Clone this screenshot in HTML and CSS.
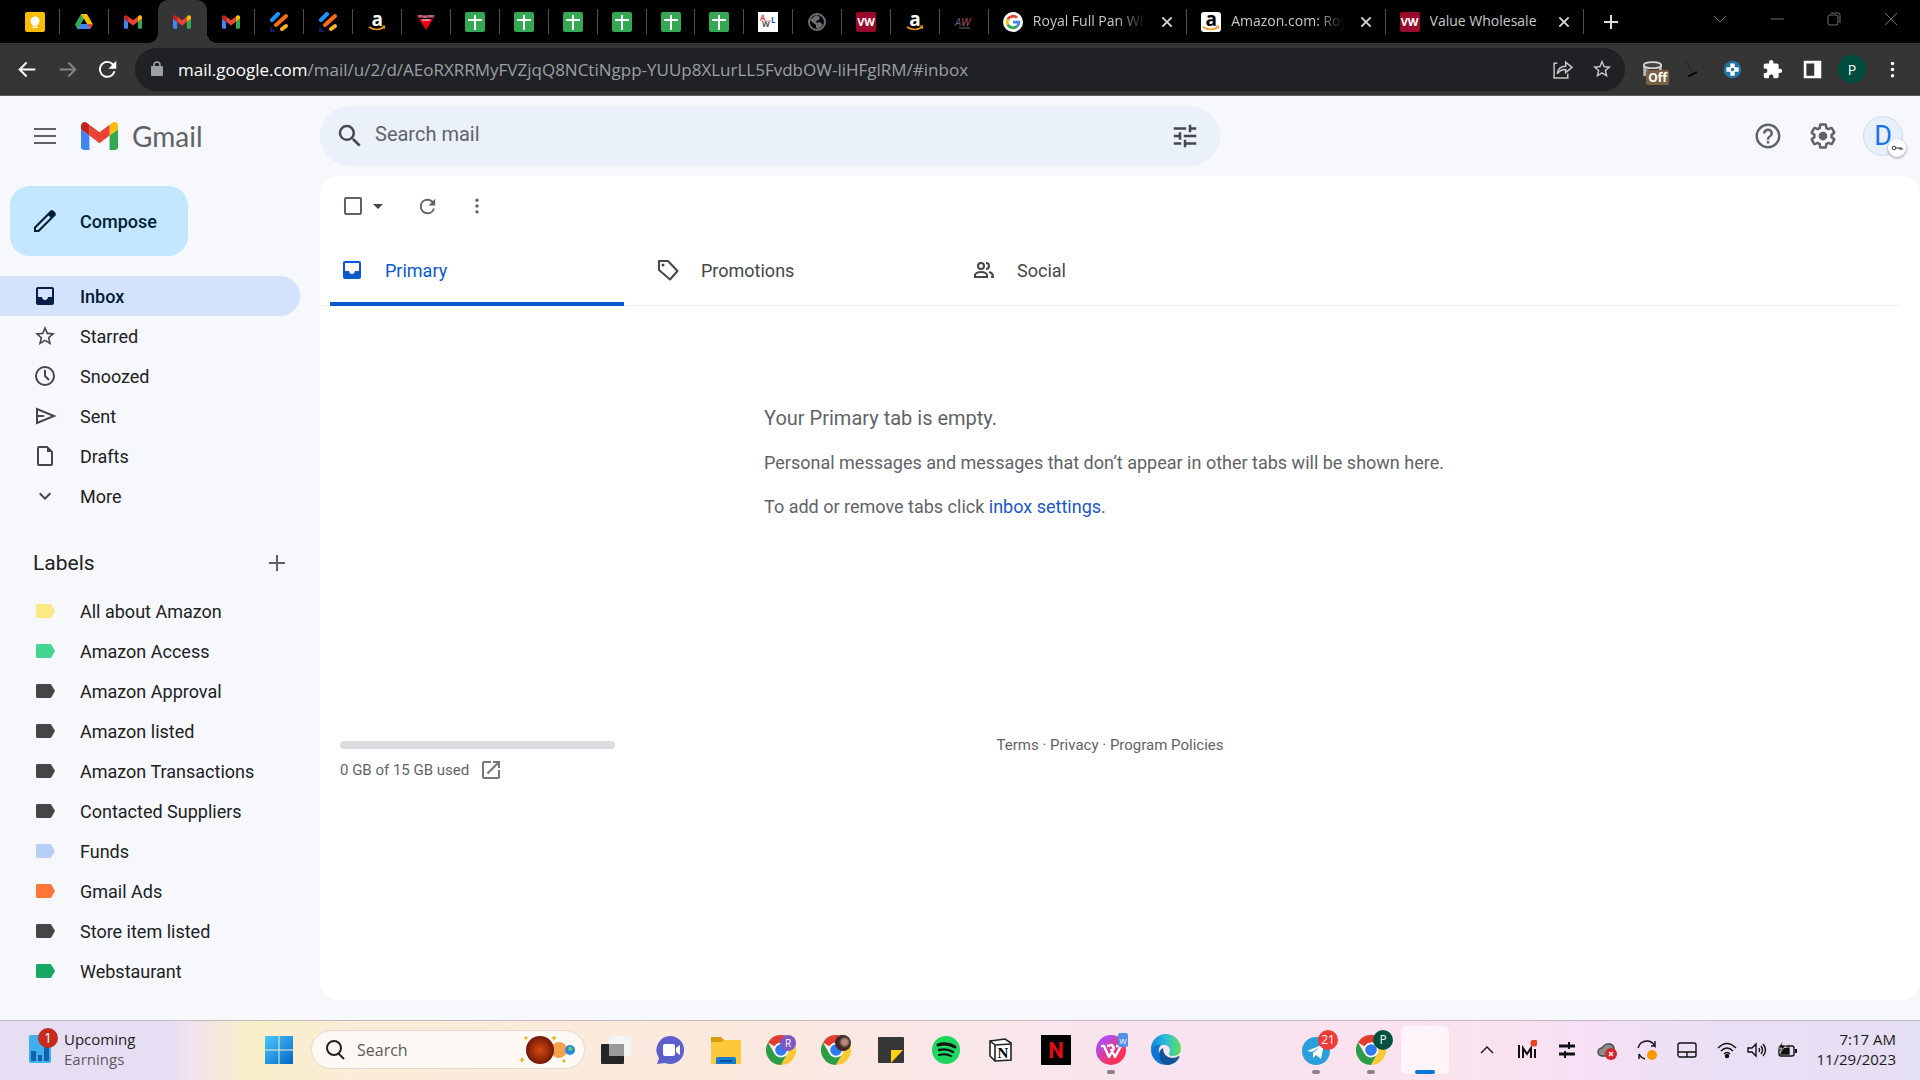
FILE: index.html
```html
<!DOCTYPE html>
<html lang="en">
<head>
  <meta charset="UTF-8" />
  <meta name="viewport" content="width=device-width, initial-scale=1.0"/>
  <title>Gmail</title>
  <link rel="stylesheet" href="styles.css">
</head>
<body>
  <!-- Shared icons -->
  <svg class="sprite" aria-hidden="true">
    <symbol id="gmail" viewBox="52 42 88 66">
      <path fill="#4285f4" d="M58 108h14V74L52 59v43c0 3.320 2.690 6 6 6"/>
      <path fill="#34a853" d="M120 108h14c3.320 0 6-2.690 6-6V59l-20 15"/>
      <path fill="#fbbc04" d="M120 48v26l20-15v-8c0-7.420-8.470-11.650-14.400-7.200"/>
      <path fill="#ea4335" d="M72 74V48l24 18 24-18v26L96 92"/>
      <path fill="#c5221f" d="M52 51v8l20 15V48l-5.600-4.200c-5.940-4.450-14.400-.22-14.400 7.200"/>
    </symbol>
    <symbol id="sheet" viewBox="0 0 20 20">
      <rect width="20" height="20" rx="2" fill="#34a853"/>
      <path d="M9 3h2v4h6v2h-6v9H9V9H3V7h6z" fill="#fff"/>
    </symbol>
    <symbol id="stripes" viewBox="0 0 20 20">
      <g fill="none" stroke-width="4" stroke-linecap="round">
        <path d="M3 8l6-6" stroke="#1a96ff"/>
        <path d="M7 13L17 4" stroke="#ff6a13"/>
        <path d="M13 17l4-3" stroke="#fdb022"/>
      </g>
      <path d="M1 14l6 6H1z" fill="#101a5c"/>
    </symbol>
    <symbol id="smile" viewBox="0 0 20 20">
      <path d="M2 15q8 5 15 0" fill="none" stroke="#f79a1c" stroke-width="1.600"/>
      <path d="M15 14h3l-1 3" fill="none" stroke="#f79a1c"/>
    </symbol>
    <symbol id="chrome" viewBox="0 0 30 30">
      <path d="M15 15L2 7.500A15 15 0 0 1 28 7.500H15z" fill="#e33b2e"/>
      <path d="M15 15l6.500 3.750L15 30A15 15 0 0 1 2 7.500l6.500 11.250z" fill="#2a9d46"/>
      <path d="M15 7.500h13A15 15 0 0 1 15 30l6.500-11.250L15 15z" fill="#fcc934"/>
      <circle cx="15" cy="15" r="7.500" fill="#fff"/>
      <circle cx="15" cy="15" r="5.800" fill="#3079ee"/>
    </symbol>
    <symbol id="close" viewBox="0 0 12 12">
      <path d="M2 2l8 8M10 2l-8 8" stroke="#d5d5d5" stroke-width="1.600"/>
    </symbol>
    <symbol id="inbox" viewBox="0 0 24 24">
      <path fill="currentColor" fill-rule="evenodd" d="M19 3H5c-1.100 0-2 .9-2 2v14c0 1.100.9 2 2 2h14c1.100 0 2-.9 2-2V5c0-1.100-.9-2-2-2zM5 5h14v8h-4c0 1.600-1.350 3-3 3s-3-1.400-3-3H5z"/>
    </symbol>
    <symbol id="label" viewBox="0 0 24 24">
      <path fill="currentColor" d="M17 5H4.500C3.700 5 3 5.700 3 6.500v11c0 .8.7 1.500 1.500 1.500H17c.6 0 1-.3 1.400-.8L22 12l-3.600-6.200C18 5.300 17.600 5 17 5z"/>
    </symbol>
    <symbol id="dots" viewBox="0 0 24 24">
      <g fill="currentColor"><circle cx="12" cy="5" r="2"/><circle cx="12" cy="12" r="2"/><circle cx="12" cy="19" r="2"/></g>
    </symbol>
    <symbol id="refresh" viewBox="0 0 24 24">
      <path fill="currentColor" d="M17.650 6.350A7.960 7.960 0 0 0 12 4a8 8 0 1 0 7.730 10h-2.080A6 6 0 1 1 12 6c1.660 0 3.140.69 4.220 1.780L13 11h7V4z"/>
    </symbol>
    <symbol id="search" viewBox="0 0 24 24">
      <path fill="currentColor" d="M15.500 14h-.79l-.28-.27A6.470 6.470 0 0 0 16 9.500 6.500 6.500 0 1 0 9.500 16c1.610 0 3.090-.59 4.230-1.570l.27.28v.79l5 4.990L20.490 19zm-6 0C7.010 14 5 11.990 5 9.500S7.010 5 9.500 5 14 7.010 14 9.500 11.990 14 9.500 14z"/>
    </symbol>
    <symbol id="star" viewBox="0 0 24 24">
      <path fill="currentColor" d="M22 9.240l-7.190-.62L12 2 9.190 8.630 2 9.240l5.460 4.730L5.820 21 12 17.270 18.180 21l-1.630-7.030zM12 15.400l-3.760 2.270 1-4.280-3.320-2.880 4.380-.38L12 6.100l1.710 4.040 4.380.38-3.320 2.880 1 4.280z"/>
    </symbol>
    <symbol id="chevron" viewBox="0 0 24 24">
      <path fill="currentColor" d="M7.410 8.590L12 13.170l4.590-4.580L18 10l-6 6-6-6z"/>
    </symbol>
  </svg>

  <!-- Browser window -->
  <div class="tabstrip">
    <div class="tabs">
      <div class="tab"><svg viewBox="0 0 20 20"><rect width="20" height="20" rx="2" fill="#fbbc04"/><circle cx="10" cy="9" r="4.500" fill="#fff"/><path d="M8 12h4v2H8zM7.500 14.600h5v1.400h-5z" fill="#fff"/></svg></div>
      <div class="tab"><svg viewBox="0 0 20 20"><path d="M7 2h6L7 12.500 4 18 1 12.500z" fill="#34a853"/><path d="M7 2h6l6 10.500h-6z" fill="#fbbc04"/><path d="M4 17l3-5h12l-3 5z" fill="#4285f4"/><path d="M13 12h6l-3 5z" fill="#ea4335"/><path d="M10 7l3 5H7z" fill="#000"/></svg></div>
      <div class="tab plain"><svg class="mini"><use href="#gmail"/></svg></div>
      <div class="tab active"><svg class="mini"><use href="#gmail"/></svg></div>
      <div class="tab"><svg class="mini"><use href="#gmail"/></svg></div>
      <div class="tab"><svg><use href="#stripes"/></svg></div>
      <div class="tab"><svg><use href="#stripes"/></svg></div>
      <div class="tab"><span class="amazon">a<svg><use href="#smile"/></svg></span></div>
      <div class="tab"><svg viewBox="0 0 20 20"><path d="M3 7h14l-7 11z" fill="#f00018"/><path d="M1 3h18l-1 3H2z" fill="#8d3450"/><path d="M3 4h3m1 1h4m1-1h5" stroke="#e3a0a8"/><path d="M6 8h8" stroke="#fff"/></svg></div>
      <div class="tab"><svg><use href="#sheet"/></svg></div>
      <div class="tab"><svg><use href="#sheet"/></svg></div>
      <div class="tab"><svg><use href="#sheet"/></svg></div>
      <div class="tab"><svg><use href="#sheet"/></svg></div>
      <div class="tab"><svg><use href="#sheet"/></svg></div>
      <div class="tab"><svg><use href="#sheet"/></svg></div>
      <div class="tab"><svg viewBox="0 0 20 20"><rect width="20" height="20" fill="#fff"/><g font-size="8" font-weight="700"><text x="2" y="9" fill="#e04848">A</text><text x="4" y="15" fill="#555">W</text><text x="13" y="11" fill="#2457c5">L</text></g><path d="M8 9h5" stroke="#e99"/></svg></div>
      <div class="tab"><svg viewBox="0 0 20 20"><circle cx="10" cy="10" r="8" fill="none" stroke="#6b6e73" stroke-width="2"/><path d="M3 8l6-5 4 2-1 3-3 1 1 2 3-1 3 3-4 4-3-1v-3l-3-2z" fill="#6b6e73"/></svg></div>
      <div class="tab"><span class="vw">VW</span></div>
      <div class="tab"><span class="amazon">a<svg><use href="#smile"/></svg></span></div>
      <div class="tab"><svg viewBox="0 0 20 20"><g font-size="11" font-style="italic"><text x="1" y="14" fill="#56617e">A</text><text x="7" y="14" fill="#b5545a">W</text></g><path d="M5 16h11" stroke="#666"/></svg></div>
      <div class="tab wide"><svg viewBox="0 0 20 20"><circle cx="10" cy="10" r="10" fill="#fff"/><g fill="none" stroke-width="2.800"><path d="M4.800 7.400A5.900 5.900 0 0 1 14 5.700" stroke="#ea4335"/><path d="M4.800 12.600a5.900 5.900 0 0 1 0-5.200" stroke="#fbbc04"/><path d="M14 14.300a5.900 5.900 0 0 1-9.200-1.700" stroke="#34a853"/><path d="M10 10.200h5.900a5.900 5.900 0 0 1-1.900 4.100" stroke="#4285f4"/></g></svg><span class="tab-title">Royal Full Pan Wh</span><svg class="x"><use href="#close"/></svg></div>
      <div class="tab wide"><span class="amazon light">a<svg><use href="#smile"/></svg></span><span class="tab-title">Amazon.com: Roy</span><svg class="x"><use href="#close"/></svg></div>
      <div class="tab wide"><span class="vw">VW</span><span class="tab-title">Value Wholesale</span><svg class="x"><use href="#close"/></svg></div>
    </div>
    <button class="new-tab" aria-label="New tab"><svg viewBox="0 0 16 16"><path d="M8 1v14M1 8h14" stroke="#ddd" stroke-width="2"/></svg></button>
    <div class="window-controls">
      <button aria-label="Search tabs"><svg viewBox="0 0 14 14"><path d="M1 4l6 6 6-6"/></svg></button>
      <button aria-label="Minimize"><svg viewBox="0 0 14 14"><path d="M1 7h13"/></svg></button>
      <button aria-label="Restore"><svg viewBox="0 0 14 14"><rect x="1" y="3" width="10" height="10" rx="2"/><path d="M4 1h7q2 0 2 2v8"/></svg></button>
      <button aria-label="Close"><svg viewBox="0 0 14 14"><path d="M1 1l12 12M13 1L1 13"/></svg></button>
    </div>
  </div>

  <div class="toolbar">
    <button aria-label="Back"><svg viewBox="0 0 24 24"><path d="M21 12H4M11 4l-8 8 8 8" fill="none" stroke="#fff" stroke-width="2.200"/></svg></button>
    <button aria-label="Forward"><svg viewBox="0 0 24 24"><path d="M3 12h17M13 4l8 8-8 8" fill="none" stroke="#858585" stroke-width="2.200"/></svg></button>
    <button aria-label="Reload"><svg viewBox="0 0 24 24"><path d="M20 14a8.500 8.500 0 1 1-2-8l3 3" fill="none" stroke="#fff" stroke-width="2.200"/><path d="M22 2v9h-9z" fill="#fff"/></svg></button>
    <div class="omnibox">
      <svg class="lock" viewBox="0 0 12 16"><rect y="5" width="12" height="10" rx="1" fill="#9aa0a6"/><path d="M3 6V4a3 3 0 0 1 6 0v2" fill="none" stroke="#9aa0a6" stroke-width="1.600"/></svg>
      <div class="url"><span>mail.google.com</span>/mail/u/2/d/AEoRXRRMyFVZjqQ8NCtiNgpp-YUUp8XLurLL5FvdbOW-liHFglRM/#inbox</div>
      <button aria-label="Share"><svg viewBox="0 0 20 20"><path d="M5 4H2v14h13v-4M5 14q1-7 8-7V3l6 5-6 5V10q-5 0-8 4z" fill="none" stroke="#c4c7c5" stroke-width="1.400"/></svg></button>
      <button aria-label="Bookmark"><svg class="bookmark"><use href="#star"/></svg></button>
    </div>
    <div class="extensions">
      <button aria-label="Extension off"><svg viewBox="0 0 24 24"><path d="M3 8v10h3v-6M21 8v8" fill="none" stroke="#b9b9b9" stroke-width="3"/><ellipse cx="12" cy="7" rx="10" ry="3.500" fill="#444" stroke="#d6d6d6" stroke-width="2"/></svg><span class="off">Off</span></button>
      <button aria-label="Extension"><svg viewBox="0 0 24 24"><path d="M5 2l7 14" stroke="#222"/><path d="M7 20l10-5" stroke="#000" stroke-width="2"/></svg></button>
      <button aria-label="Extension"><svg viewBox="0 0 24 24"><circle cx="12" cy="12" r="10" fill="#2173a8"/><path d="M9.500 5h5v4.500H19v5h-4.500V19h-5v-4.500H5v-5h4.500z" fill="#fff"/><circle cx="12" cy="12" r="2" fill="#2173a8"/></svg></button>
      <button aria-label="Extensions"><svg viewBox="0 0 24 24"><path fill="#fff" d="M20.500 11H19V7c0-1.100-.9-2-2-2h-4V3.500a2.500 2.500 0 0 0-5 0V5H4c-1.100 0-2 .9-2 2v3.800h1.500a2.700 2.700 0 0 1 0 5.400H2V20c0 1.100.9 2 2 2h3.800v-1.500a2.700 2.700 0 0 1 5.400 0V22H17c1.100 0 2-.9 2-2v-4h1.500a2.500 2.500 0 0 0 0-5z"/></svg></button>
      <button aria-label="Side panel"><svg viewBox="0 0 24 24"><path d="M2 2h20v20H2zM5 5v14h9V5z" fill="#fff" fill-rule="evenodd"/></svg></button>
      <button class="profile">P</button>
      <button aria-label="Menu"><svg class="white"><use href="#dots"/></svg></button>
    </div>
  </div>

  <!-- Gmail -->
  <div class="gmail">
    <header class="header">
      <div class="brand">
        <button aria-label="Main menu"><svg viewBox="0 0 24 24"><path d="M1 5h22M1 12h22M1 19h22" stroke="#5f6368" stroke-width="2"/></svg></button>
        <a href="#inbox" class="logo"><svg><use href="#gmail"/></svg>Gmail</a>
      </div>
      <form class="searchbar">
        <button type="button" aria-label="Search mail"><svg><use href="#search"/></svg></button>
        <input type="text" placeholder="Search mail" aria-label="Search mail">
        <button type="button" aria-label="Show search options"><svg viewBox="0 0 24 24"><path fill="currentColor" d="M3 17v2h6v-2zM3 5v2h10V5zm10 16v-2h8v-2h-8v-2h-2v6zM7 9v2H3v2h4v2h2V9zm14 4v-2H11v2zm-6-4h2V7h4V5h-4V3h-2z"/></svg></button>
      </form>
      <div class="header-actions">
        <button aria-label="Support"><svg viewBox="0 0 24 24"><path fill="currentColor" d="M11 18h2v-2h-2zm1-16a10 10 0 1 0 0 20 10 10 0 0 0 0-20zm0 18c-4.410 0-8-3.590-8-8s3.590-8 8-8 8 3.590 8 8-3.590 8-8 8zm0-14c-2.210 0-4 1.790-4 4h2c0-1.100.9-2 2-2s2 .9 2 2c0 2-3 1.750-3 5h2c0-2.250 3-2.500 3-5 0-2.210-1.790-4-4-4z"/></svg></button>
        <button aria-label="Settings"><svg viewBox="0 0 24 24"><path fill="currentColor" d="M13.850 22.250h-3.700c-.74 0-1.360-.54-1.450-1.270l-.27-1.890c-.27-.14-.53-.29-.79-.46l-1.800.72c-.7.26-1.470-.03-1.810-.65L2.200 15.530c-.35-.66-.2-1.440.36-1.880l1.530-1.190c-.01-.15-.02-.3-.02-.46 0-.15.01-.31.02-.46l-1.520-1.190c-.59-.45-.74-1.260-.37-1.880l1.850-3.190c.34-.62 1.110-.9 1.790-.63l1.810.73c.26-.17.52-.32.78-.46l.27-1.910c.09-.7.71-1.250 1.440-1.250h3.700c.74 0 1.360.54 1.450 1.270l.27 1.890c.27.14.53.29.79.46l1.800-.72c.71-.26 1.480.03 1.820.65l1.840 3.180c.36.66.2 1.440-.36 1.880l-1.520 1.190c.01.15.02.3.02.46s-.01.31-.02.46l1.520 1.190c.56.45.72 1.230.37 1.860l-1.860 3.220c-.34.62-1.110.9-1.800.63l-1.800-.72c-.26.17-.52.32-.78.46l-.27 1.910c-.1.68-.72 1.220-1.460 1.220zm-3.230-2h2.760l.37-2.550.53-.22c.44-.18.88-.44 1.340-.78l.45-.34 2.380.96 1.380-2.400-2.030-1.580.07-.56c.03-.26.06-.51.06-.78s-.03-.53-.06-.78l-.07-.56 2.030-1.580-1.390-2.400-2.390.96-.45-.35c-.42-.32-.87-.58-1.330-.77l-.52-.22-.37-2.550h-2.760l-.37 2.550-.53.21c-.44.19-.88.44-1.340.79l-.45.33-2.380-.95-1.390 2.390 2.030 1.580-.07.56a7 7 0 0 0-.06.79c0 .26.02.53.06.78l.07.56-2.030 1.580 1.380 2.400 2.390-.96.45.35c.43.33.86.58 1.330.77l.53.22z"/><circle cx="12" cy="12" r="3.500" fill="currentColor"/></svg></button>
        <button class="avatar">D<span class="key"><svg viewBox="0 0 12 12"><circle cx="3" cy="6" r="1.800"/><path d="M5 6h6v2M9 6v2"/></svg></span></button>
      </div>
    </header>

    <aside class="sidebar">
      <button class="compose"><svg viewBox="0 0 24 24"><path fill="#001d35" fill-rule="evenodd" d="M1 23v-5L17.500 1.500q1.500-1 3 .3l1.700 1.700q1.300 1.500.3 3L6 23zM3 21h2L17.500 8.500l-2-2L3 19z"/></svg>Compose</button>
      <nav class="menu">
        <a href="#inbox" class="selected"><svg><use href="#inbox"/></svg>Inbox</a>
        <a href="#starred"><svg><use href="#star"/></svg>Starred</a>
        <a href="#snoozed"><svg viewBox="0 0 24 24"><g fill="none" stroke="currentColor" stroke-width="2"><circle cx="12" cy="12" r="9"/><path d="M12 6v6l4 4"/></g></svg>Snoozed</a>
        <a href="#sent"><svg viewBox="0 0 24 24"><path d="M4 5v14l17-7zM4 12h7" fill="none" stroke="currentColor" stroke-width="2"/></svg>Sent</a>
        <a href="#drafts"><svg viewBox="0 0 24 24"><path d="M14 3H6q-1 0-1 1v16q0 1 1 1h12q1 0 1-1V8z" fill="none" stroke="currentColor" stroke-width="2"/><path d="M14 3v5h5z" fill="currentColor"/></svg>Drafts</a>
        <a href="#more"><svg><use href="#chevron"/></svg>More</a>
      </nav>
      <div class="labels-head">
        <h2>Labels</h2>
        <button aria-label="Create new label"><svg viewBox="0 0 24 24"><path d="M12 4v16M4 12h16" stroke="#5f6368" stroke-width="2"/></svg></button>
      </div>
      <nav class="menu">
        <a href="#label"><svg class="yellow"><use href="#label"/></svg>All about Amazon</a>
        <a href="#label"><svg class="mint"><use href="#label"/></svg>Amazon Access</a>
        <a href="#label"><svg><use href="#label"/></svg>Amazon Approval</a>
        <a href="#label"><svg><use href="#label"/></svg>Amazon listed</a>
        <a href="#label"><svg><use href="#label"/></svg>Amazon Transactions</a>
        <a href="#label"><svg><use href="#label"/></svg>Contacted Suppliers</a>
        <a href="#label"><svg class="sky"><use href="#label"/></svg>Funds</a>
        <a href="#label"><svg class="orange"><use href="#label"/></svg>Gmail Ads</a>
        <a href="#label"><svg><use href="#label"/></svg>Store item listed</a>
        <a href="#label"><svg class="green"><use href="#label"/></svg>Webstaurant</a>
      </nav>
    </aside>

    <main class="mail">
      <div class="mail-tools">
        <input type="checkbox" aria-label="Select all">
        <button class="caret" aria-label="Select"></button>
        <button class="tool" aria-label="Refresh"><svg><use href="#refresh"/></svg></button>
        <button class="tool" aria-label="More"><svg><use href="#dots"/></svg></button>
      </div>
      <div class="categories">
        <button class="category current"><svg><use href="#inbox"/></svg>Primary</button>
        <button class="category"><svg viewBox="0 0 24 24"><path d="M3 3h9l9.500 10-7.500 8.500L3 12z" fill="none" stroke="currentColor" stroke-width="2" stroke-linejoin="round"/><circle cx="7" cy="7" r="1.500" fill="currentColor"/></svg>Promotions</button>
        <button class="category"><svg viewBox="0 0 24 24"><g fill="none" stroke="currentColor" stroke-width="2"><circle cx="9" cy="8" r="3"/><path d="M3 19v-2q1-3 6-3t6 3v2zM14 5q3 0 3 3t-3 3M17 14q4 1 4 5h-2"/></g></svg>Social</button>
      </div>
      <div class="empty">
        <div>
          <h3>Your Primary tab is empty.</h3>
          <p>Personal messages and messages that don’t appear in other tabs will be shown here.</p>
          <p>To add or remove tabs click <a href="#settings">inbox settings</a>.</p>
        </div>
      </div>
      <footer class="mail-footer">
        <div class="storage">
          <div class="bar"></div>
          <div class="used">0 GB of 15 GB used <a href="#storage" aria-label="Manage storage"><svg viewBox="0 0 24 24"><path fill="#747775" d="M19 19H5V5h7V3H5a2 2 0 0 0-2 2v14a2 2 0 0 0 2 2h14c1.100 0 2-.9 2-2v-7h-2zM14 3v2h3.590l-9.830 9.830 1.410 1.410L19 6.410V10h2V3z"/></svg></a></div>
        </div>
        <div class="terms"><a href="#terms">Terms</a> · <a href="#privacy">Privacy</a> · <a href="#policies">Program Policies</a></div>
      </footer>
    </main>
  </div>

  <!-- Taskbar -->
  <div class="taskbar">
    <button class="widget">
      <svg viewBox="0 0 30 36"><rect x="1" y="8" width="22" height="28" rx="2" fill="#3fb0ee"/><path d="M3 24h5v10H3zM10 28h4v6h-4zM16 20h5v14h-5z" fill="#1260a8"/><circle cx="20" cy="11" r="10" fill="#c42b1c"/><text x="20" y="16" text-anchor="middle" font-size="14" fill="#fff">1</text></svg>
      <span>Upcoming<small>Earnings</small></span>
    </button>
    <div class="apps">
      <button class="start" aria-label="Start"><svg viewBox="0 0 30 30"><defs><linearGradient id="win" x2="1" y2="1"><stop stop-color="#4cc8fb"/><stop offset="1" stop-color="#0067c9"/></linearGradient></defs><path fill="url(#win)" d="M1 1h13.500v13.500H1zM15.500 1H29v13.500H15.500zM1 15.500h13.500V29H1zM15.500 15.500H29V29H15.500z"/></svg></button>
      <label class="task-search">
        <svg viewBox="0 0 20 20"><circle cx="9" cy="8" r="7"/><path d="M13 13l6 6"/></svg>
        <input type="text" placeholder="Search">
        <svg class="planets" viewBox="0 0 60 34"><defs><radialGradient id="mars"><stop stop-color="#d64a10"/><stop offset="1" stop-color="#741804"/></radialGradient></defs><circle cx="40" cy="17" r="8" fill="#f6a04d"/><circle cx="51" cy="17" r="5" fill="#238ce0"/><path d="M50 13q5 1 3 5l-4-1z" fill="#5fc86a"/><circle cx="21" cy="17" r="14" fill="url(#mars)"/><path fill="#e8b730" d="M35 2l1 2 2 1-2 1-1 2-1-2-2-1 2-1zM3 24l1 2 2 1-2 1-1 2-1-2-2-1 2-1zM7 3l2 2-2 2-2-2zM45 26l2 2-2 2-2-2z"/></svg>
      </label>
      <button aria-label="Task view"><svg viewBox="0 0 30 30"><rect y="9" width="23" height="20" rx="1" fill="#252525"/><rect x="8" y="1" width="22" height="20" rx="1" fill="#f4f4f4"/><rect x="8" y="9" width="15" height="12" fill="#999"/></svg></button>
      <button aria-label="Chat"><svg viewBox="0 0 30 30"><path d="M15 1a14 14 0 1 1-6 27l-8 1 2-6A14 14 0 0 1 15 1z" fill="#5c60cc"/><rect x="7" y="9" width="12" height="12" rx="2" fill="#fff"/><path d="M20 13l4-3v10l-4-3z" fill="#fff"/></svg></button>
      <button aria-label="File Explorer"><svg viewBox="0 0 30 30"><path d="M0 3q0-1 1-1h9l3 3h16q1 0 1 1v10H0z" fill="#dc9b08"/><path d="M0 7h10l3-2h17v23q0 1-1 1H1q-1 0-1-1z" fill="#fdc93c"/><path d="M5 29v-5q0-2 2-2h16q2 0 2 2v5z" fill="#147cd0"/><path d="M9 26h12" stroke="#0b4f90" stroke-width="2"/></svg></button>
      <button aria-label="Chrome"><svg><use href="#chrome"/></svg><span class="badge purple">R</span></button>
      <button aria-label="Chrome"><svg><use href="#chrome"/></svg><span class="badge photo"></span></button>
      <button aria-label="Sticky Notes"><svg viewBox="0 0 30 30"><rect x="2" y="2" width="26" height="26" rx="1" fill="#373737"/><path d="M15 28V15h12z" fill="#fcd116"/></svg></button>
      <button aria-label="Spotify"><svg viewBox="0 0 30 30"><circle cx="15" cy="15" r="14" fill="#1ed760"/><g fill="none" stroke="#111" stroke-linecap="round"><path d="M7 10q9-3 17 2" stroke-width="3"/><path d="M8 15q8-2 14 2" stroke-width="2.400"/><path d="M8 20q7-2 12 1" stroke-width="2"/></g></svg></button>
      <button aria-label="Notion"><svg viewBox="0 0 30 30"><path d="M4 6l15-2 6 4v17l-16 1-5-5z" fill="#fff" stroke="#222" stroke-width="1.600"/><path d="M4 6l5 4 16-1M9 10v16" fill="none" stroke="#222" stroke-width="1.600"/><text x="17" y="23" text-anchor="middle" font-size="15" font-weight="700" font-family="Liberation Serif, serif">N</text></svg></button>
      <button aria-label="Netflix"><svg viewBox="0 0 30 30"><rect width="30" height="30" fill="#000"/><text x="15" y="23" text-anchor="middle" font-size="22" font-weight="700" font-family="Roboto, sans-serif" fill="#e50914">N</text></svg></button>
      <button class="running" aria-label="WPS Office"><svg viewBox="0 0 30 30"><defs><linearGradient id="wps" x2="1" y2="1"><stop offset=".2" stop-color="#b04cf5"/><stop offset=".7" stop-color="#fa3258"/></linearGradient></defs><circle cx="15" cy="15" r="15" fill="url(#wps)"/><path d="M5 11h3l5 11 5-9-2-3-5 1M15 14l4 8 6-11h-5" fill="none" stroke="#fff" stroke-width="2.400" stroke-linejoin="round"/><rect x="22" y="-2" width="10" height="14" rx="2" fill="#4f8fe8"/><text x="27" y="9" text-anchor="middle" font-size="8" fill="#fff">W</text></svg></button>
      <button aria-label="Edge"><svg viewBox="0 0 30 30"><defs><linearGradient id="edge" x2="1"><stop stop-color="#1680d8"/><stop offset=".5" stop-color="#2ebfdc"/><stop offset="1" stop-color="#61e04f"/></linearGradient></defs><path d="M0 15A15 15 0 0 1 30 13q0 8-8 8-4 0-4-2l1-4q-1-5-6-5Q4 10 0 15z" fill="url(#edge)"/><path d="M0 15q4-6 10-5-3 3-2 8 2 11 12 11A15 15 0 0 1 0 15z" fill="#0c76d2"/><path d="M12 13q0 9 9 10 4 0 7-2 1 0 0 2-4 7-12 7-8-2-8-10 0-5 4-7z" fill="#12539c"/></svg></button>
    </div>
    <div class="apps pinned">
      <button class="running" aria-label="Telegram"><svg viewBox="0 0 30 30"><circle cx="15" cy="16" r="14" fill="#2a9fdc"/><path d="M6 16l17-7-3 15-5-4-3 3v-5l7-6-8 5z" fill="#fff"/></svg><span class="badge red">21</span></button>
      <button class="running" aria-label="Chrome"><svg><use href="#chrome"/></svg><span class="badge teal">P</span></button>
      <button class="focused" aria-label="Window"></button>
    </div>
    <div class="tray">
      <button aria-label="Hidden icons"><svg viewBox="0 0 20 20"><path d="M4 13l6-6 6 6"/></svg></button>
      <button aria-label="Malwarebytes"><svg viewBox="0 0 20 20"><path d="M2 5v13M6 18V8l4 6 4-6v10M18 9v9" stroke-width="2"/><circle cx="17" cy="3" r="3.500" fill="#ee4023" stroke="none"/></svg></button>
      <button aria-label="Mixer"><svg viewBox="0 0 20 20"><path d="M2 6h16M2 14h16" stroke-width="3"/><path d="M12 2v7M8 11v7" stroke-width="2"/></svg></button>
      <button aria-label="OneDrive"><svg viewBox="0 0 20 20"><path d="M5 16a4 4 0 0 1 0-8q3-5 8-4 4 1 4 5v7z" fill="#8c8c8c" stroke="#444"/><circle cx="14" cy="14" r="6" fill="#d6242c" stroke="none"/><path d="M12 12l4 4M16 12l-4 4" stroke="#fff"/></svg></button>
      <button aria-label="Update"><svg viewBox="0 0 20 20"><path d="M1 8q2-7 9-7 5 0 8 5V1M2 19v-5q2 4 6 5M18 6h-4"/><circle cx="15" cy="15" r="5" fill="#ff9800" stroke="none"/></svg></button>
      <button aria-label="Touchpad"><svg viewBox="0 0 20 20"><rect x="1" y="3" width="18" height="14" rx="2"/><path d="M1 12h18M10 12v5"/></svg></button>
      <button class="status" aria-label="Network, volume and battery">
        <svg viewBox="0 0 20 20"><path d="M1 8q9-9 18 0M4 11q6-6 12 0M7 14q3-3 6 0"/><circle cx="10" cy="16" r="1.500" fill="#111"/></svg>
        <svg viewBox="0 0 20 20"><path d="M1 8h4l4-4v12l-4-4H1zM12 8q1 2 0 4M14 6q3 4 0 8M16 4q5 6 0 12"/></svg>
        <svg viewBox="0 0 20 20"><rect x="2" y="6" width="15" height="10" rx="2"/><path d="M4 14V9l8-1v6z" fill="#111"/><path d="M19 9v4" stroke-width="2"/><path d="M6 1L1 8h4l-2 5 6-8H5z" fill="#111" stroke="#eee" stroke-width=".6"/></svg>
      </button>
      <div class="clock">7:17 AM<br>11/29/2023</div>
    </div>
  </div>
</body>
</html>
```

FILE: styles.css
```css
* {
  box-sizing: border-box;
}
body {
  font-family: Roboto, sans-serif;
  margin: 0;
  background-color: #f6f8fc;
  display: flex;
  flex-direction: column;
  min-height: 100vh;
}
button {
  background: none;
  border: none;
  padding: 0;
  font-family: inherit;
  color: inherit;
  display: flex;
  align-items: center;
  justify-content: center;
  cursor: pointer;
}
input {
  font-family: inherit;
}
a {
  text-decoration: none;
  color: inherit;
}
svg {
  display: block;
  flex: none;
}
.sprite {
  position: absolute;
  width: 0;
  height: 0;
}

/* browser */
.tabstrip {
  background-color: #000;
  color: #c8c8c8;
  display: flex;
  height: 43px;
  padding-left: 11px;
  font-family: "Open Sans", sans-serif;
}
.tabs {
  display: flex;
  flex: 1;
  min-width: 0;
}
.tab {
  flex: 49 49 49px;
  min-width: 0;
  display: flex;
  align-items: center;
  justify-content: center;
  background: linear-gradient(#505050, #505050) right 9px / 1px 25px no-repeat;
  padding-right: 1px;
  color: #fff;
}
.tab svg {
  width: 20px;
  height: 20px;
}
.tab .mini {
  width: 18px;
  height: 14px;
}
.tab.plain {
  background: none;
}
.tab.active {
  position: relative;
  background: #353535;
  border-radius: 10px 10px 0 0;
}
.tab.active::before,
.tab.active::after {
  content: "";
  position: absolute;
  bottom: 0;
  left: -10px;
  width: 10px;
  height: 10px;
  background: radial-gradient(circle at 0 0, transparent 10px, #353535 10px);
}
.tab.active::after {
  left: auto;
  right: -10px;
  background: radial-gradient(circle at 100% 0, transparent 10px, #353535 10px);
}
.tab.wide {
  flex: 200 200 200px;
  justify-content: flex-start;
  padding: 0 13px 0 14px;
}
.amazon {
  position: relative;
  width: 20px;
  height: 20px;
  font-size: 19px;
  font-weight: 700;
  line-height: 14px;
  text-align: center;
}
.amazon svg {
  position: absolute;
  top: 0;
  left: 0;
}
.amazon.light {
  background-color: #fff;
  border-radius: 3px;
  color: #000;
}
.vw {
  background-color: #9b0a2c;
  border-radius: 2px;
  width: 20px;
  height: 20px;
  font-size: 11px;
  font-weight: 700;
  line-height: 20px;
  text-align: center;
}
.tab-title {
  flex: 1;
  margin: 0 14px 0 10px;
  font-size: 14px;
  line-height: 20px;
  padding-bottom: 2px;
  color: #c8c8c8;
  white-space: nowrap;
  overflow: hidden;
  mask-image: linear-gradient(to right, #000 75%, transparent);
}
.tab:last-child .tab-title {
  mask-image: none;
}
.tab .x {
  width: 14px;
  height: 14px;
}
.new-tab {
  width: 54px;
}
.new-tab svg {
  width: 16px;
  height: 16px;
}
.window-controls {
  display: flex;
  width: 282px;
  justify-content: flex-end;
}
.window-controls button {
  width: 57px;
  padding: 0 2px 6px 0;
}
.window-controls svg {
  width: 14px;
  height: 14px;
  fill: none;
  stroke: #6d6d6d;
}
.toolbar {
  background-color: #353535;
  border-bottom: 1px solid #5c5c5c;
  display: flex;
  align-items: center;
  height: 53px;
  padding: 0 8px 0 7px;
  font-family: "Open Sans", sans-serif;
}
.toolbar button {
  width: 40px;
  height: 40px;
  position: relative;
}
.toolbar svg {
  width: 21px;
  height: 21px;
}
.omnibox {
  background-color: #202124;
  border-radius: 22px;
  display: flex;
  align-items: center;
  flex: 1;
  height: 43px;
  margin: 0 7px 0 8px;
  padding: 0 3px 0 16px;
}
.toolbar .lock {
  width: 12px;
  height: 16px;
}
.url {
  flex: 1;
  margin-left: 15px;
  font-size: 17px;
  color: #9aa0a6;
  white-space: nowrap;
}
.url span {
  color: #fff;
}
.toolbar .bookmark {
  width: 22px;
  height: 22px;
  color: #c4c7c5;
}
.extensions {
  display: flex;
  align-items: center;
}
.off {
  position: absolute;
  right: 3px;
  bottom: 4px;
  background-color: #7b6043;
  border-radius: 2px;
  color: #fff;
  font-size: 12px;
  font-weight: 700;
  line-height: 15px;
  padding: 0 2px;
}
.toolbar .profile {
  background-color: #004d40;
  border-radius: 50%;
  color: #fff;
  font-size: 14px;
  width: 28px;
  height: 28px;
  margin: 0 6px;
}
.toolbar .white {
  color: #fff;
}

/* gmail */
.gmail {
  flex: 1;
  display: grid;
  grid-template-columns: 320px 1fr;
  grid-template-rows: 80px 1fr;
}
.header {
  grid-column: 1 / 3;
  display: flex;
  align-items: center;
  color: #5f6368;
}
.header svg {
  width: 30px;
  height: 30px;
}
.brand {
  display: flex;
  align-items: center;
  width: 320px;
  padding-left: 33px;
}
.brand button svg {
  width: 24px;
  height: 24px;
}
.logo {
  display: flex;
  align-items: center;
  gap: 14px;
  margin-left: 24px;
  font-family: Lato, sans-serif;
  font-size: 28px;
}
.brand .logo svg {
  width: 37px;
  height: 28px;
}
.searchbar {
  background-color: #eaf1fb;
  border-radius: 30px;
  color: #444746;
  display: flex;
  align-items: center;
  gap: 10px;
  width: 56%;
  max-width: 900px;
  height: 60px;
  padding: 0 20px 0 15px;
}
.searchbar input {
  background: none;
  border: none;
  flex: 1;
  padding: 0 0 4px;
  font-size: 20px;
}
.searchbar input::placeholder {
  color: #5f6368;
}
.header-actions {
  display: flex;
  align-items: center;
  gap: 25px;
  margin-left: auto;
  padding-right: 17px;
}
.avatar {
  position: relative;
  background-color: #e8f0fe;
  border: 1px solid #d3dcee;
  border-radius: 50%;
  color: #1a73e8;
  font-size: 27px;
  width: 40px;
  height: 40px;
}
.avatar .key {
  position: absolute;
  right: -4px;
  bottom: -2px;
  background-color: #fff;
  border-radius: 50%;
  box-shadow: 0 1px 3px rgba(0, 0, 0, 0.4);
  width: 18px;
  height: 18px;
  padding: 3px;
}
.avatar .key svg {
  width: 12px;
  height: 12px;
  fill: none;
  stroke: #333;
}
.sidebar {
  color: #202124;
  padding: 10px 20px 20px 0;
}
.sidebar svg {
  width: 24px;
  height: 24px;
}
.compose {
  background-color: #c2e7ff;
  border-radius: 20px;
  color: #001d35;
  font-size: 18px;
  font-weight: 500;
  gap: 23px;
  justify-content: flex-start;
  width: 178px;
  height: 70px;
  margin: 0 0 20px 10px;
  padding-left: 23px;
}
.menu a {
  display: flex;
  align-items: center;
  gap: 23px;
  height: 40px;
  padding-left: 33px;
  font-size: 18px;
}
.menu svg {
  color: #444746;
}
.menu .selected {
  background-color: #d3e3fd;
  border-radius: 0 20px 20px 0;
  color: #001d35;
  font-weight: 500;
}
.menu .selected svg {
  color: #041e49;
}
.menu .yellow { color: #fbe983; }
.menu .mint { color: #43d692; }
.menu .sky { color: #b6cff5; }
.menu .orange { color: #ff7537; }
.menu .green { color: #16a765; }
.labels-head {
  display: flex;
  align-items: center;
  justify-content: space-between;
  height: 40px;
  margin: 27px 0 8px;
  padding: 0 11px 0 33px;
}
.labels-head h2 {
  margin: 0;
  font-size: 21px;
  font-weight: 400;
}
.mail {
  background-color: #fff;
  border-radius: 20px;
  margin-bottom: 20px;
  color: #5f6368;
}
.mail-tools {
  display: flex;
  align-items: center;
  height: 60px;
  padding-left: 24px;
}
.mail-tools input {
  appearance: none;
  border: 2px solid #5f6368;
  border-radius: 2px;
  width: 18px;
  height: 18px;
  margin: 0 11px 0 0;
}
.caret {
  border: 5px solid transparent;
  border-top-color: #444746;
  border-bottom: none;
  margin-right: 19px;
}
.tool {
  width: 50px;
}
.tool svg {
  width: 23px;
  height: 23px;
}
.tool:last-child svg {
  width: 20px;
  height: 20px;
}
.categories {
  display: flex;
  border-bottom: 1px solid #eceff1;
  margin-right: 20px;
  padding-left: 10px;
}
.category {
  gap: 21px;
  justify-content: flex-start;
  width: 294px;
  height: 70px;
  margin: 0 22px -1px 0;
  padding: 0 0 2px 10px;
  font-size: 18px;
  font-weight: 400;
  color: #444746;
}
.category svg {
  width: 24px;
  height: 24px;
}
.category.current {
  background: linear-gradient(#0b57d0, #0b57d0) bottom / 100% 4px no-repeat;
  color: #0b57d0;
}
.empty {
  display: flex;
  justify-content: center;
  height: 435px;
  padding: 97px 32px 0 0;
}
.empty h3 {
  margin: 0 0 18px;
  font-size: 20px;
  font-weight: 400;
  line-height: 30px;
}
.empty p {
  margin: 0 0 20px;
  font-size: 18px;
  line-height: 24px;
}
.empty a {
  color: #1a56cc;
}
.mail-footer {
  display: grid;
  grid-template-columns: 1fr auto 1fr;
  align-items: start;
  padding: 0 40px 20px 20px;
  font-size: 15px;
}
.bar {
  background-color: #dadce0;
  border-radius: 4px;
  width: 275px;
  height: 8px;
  margin-bottom: 9px;
}
.used {
  display: flex;
  align-items: center;
  gap: 10px;
}
.used svg {
  width: 24px;
  height: 24px;
}
.terms {
  line-height: 8px;
}

/* taskbar */
.taskbar {
  display: flex;
  align-items: center;
  height: 60px;
  border-top: 1px solid #c3b9bd;
  padding: 0 24px 2px;
  background: linear-gradient(to right, #e6dff3 9%, #f3e1ef 10%, #f8efc8 13%, #fbecd9 19%, #fbe9de 38%, #f9e6ea 52%, #f8e2f0 62%, #fbe3ee 76%, #f8e0f5 82%, #e9e0f5 90%, #e5dff3);
  font-family: "Open Sans", sans-serif;
  color: #1b1b1b;
}
.widget {
  width: 226px;
  justify-content: flex-start;
  gap: 6px;
  padding: 0 0 2px 4px;
  font-size: 15px;
  line-height: 20px;
  text-align: left;
}
.widget svg {
  width: 30px;
  height: 36px;
  margin-bottom: 8px;
}
.widget small {
  display: block;
  font-size: 15px;
  color: #5c5962;
}
.apps {
  display: flex;
  align-items: center;
}
.apps button {
  position: relative;
  width: 55px;
  height: 48px;
}
.apps button svg {
  width: 30px;
  height: 30px;
  overflow: visible;
}
.apps .start {
  width: 61px;
  padding-right: 4px;
}
.task-search {
  background-color: #fef9f5;
  border: 1px solid #e4d8d0;
  border-radius: 20px;
  display: flex;
  align-items: center;
  gap: 12px;
  width: 274px;
  height: 39px;
  margin-right: 3px;
  padding: 0 5px 0 13px;
}
.task-search svg {
  width: 20px;
  height: 20px;
  fill: none;
  stroke: #222;
  stroke-width: 2;
}
.task-search .planets {
  width: 60px;
  height: 34px;
  stroke: none;
}
.task-search input {
  background: none;
  border: none;
  flex: 1;
  min-width: 0;
  padding: 0;
  font-size: 16px;
}
.task-search input::placeholder {
  color: #5e5a58;
}
.badge {
  position: absolute;
  top: 4px;
  right: 5px;
  border-radius: 50%;
  color: #fff;
  font-size: 12px;
  line-height: 20px;
  width: 20px;
  height: 20px;
}
.purple {
  background-color: #7e57c2;
  width: 16px;
  height: 16px;
  top: 9px;
  right: 12px;
  font-size: 10px;
  line-height: 16px;
}
.photo {
  background: radial-gradient(circle at 60% 45%, #b78a78 20%, #3a2725 45%);
  width: 16px;
  height: 16px;
  top: 9px;
  right: 12px;
}
.red { background-color: #f03a36; }
.teal { background-color: #00503f; }
.running::after,
.focused::after {
  content: "";
  position: absolute;
  bottom: 0;
  background-color: #8a8288;
  border-radius: 2px;
  width: 8px;
  height: 4px;
}
.pinned {
  margin-left: auto;
}
.apps .focused {
  background-color: #fef4f9;
  border-radius: 5px;
  width: 48px;
  margin-left: 3px;
}
.apps .focused::after {
  background-color: #0078d4;
  width: 20px;
}
.tray {
  display: flex;
  align-items: center;
  margin-left: 18px;
}
.tray button {
  width: 40px;
  height: 40px;
}
.tray svg {
  width: 20px;
  height: 20px;
  fill: none;
  stroke: #111;
  stroke-width: 1.4;
}
.tray .status {
  width: 100px;
  gap: 10px;
}
.clock {
  width: 89px;
  padding-bottom: 2px;
  font-size: 15px;
  line-height: 20px;
  text-align: right;
}
```
